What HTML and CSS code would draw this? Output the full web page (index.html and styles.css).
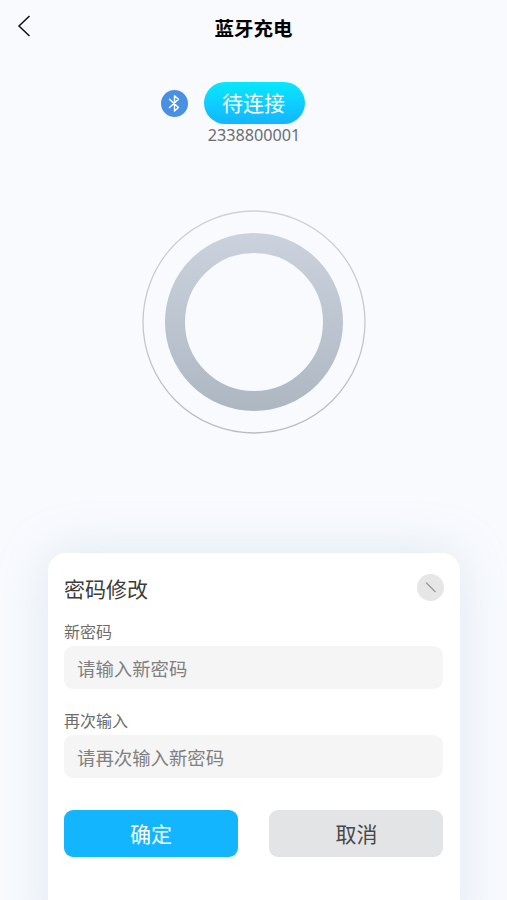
FILE: index.html
```html
<!DOCTYPE html>
<html lang="zh-CN">
<head>
<meta charset="utf-8">
<meta name="viewport" content="width=device-width, initial-scale=1">
<title>蓝牙充电</title>
<link rel="stylesheet" href="styles.css">
</head>
<body>
<div class="screen">
  <header class="navbar">
    <button class="back" aria-label="返回">
      <svg width="14" height="22" viewBox="0 0 14 22"><path d="M12.500 1 2 11l10.500 10" fill="none" stroke="#111" stroke-width="1.500"/></svg>
    </button>
    <h1 class="title">蓝牙充电</h1>
  </header>

  <section class="status">
    <span class="bluetooth">
      <svg width="27" height="27" viewBox="0 0 27 27"><path d="M8.500 9.200 17.500 17.500 13.500 21V5.800L17.500 9.300 8.500 17.500" fill="none" stroke="#fff" stroke-width="1.400" stroke-linejoin="round" stroke-linecap="round"/></svg>
    </span>
    <div class="device">
      <button class="connect">待连接</button>
      <span class="device-id">2338800001</span>
    </div>
  </section>

  <svg class="dial" width="224" height="224" viewBox="0 0 224 224">
    <defs>
      <linearGradient id="ring" x1="0" y1="23" x2="0" y2="201" gradientUnits="userSpaceOnUse">
        <stop offset="0" stop-color="#cbd2de"/><stop offset="1" stop-color="#adb7c2"/>
      </linearGradient>
      <linearGradient id="edge" x1="0" y1="0" x2="0" y2="224" gradientUnits="userSpaceOnUse">
        <stop offset="0" stop-color="#d0d2d6"/><stop offset="1" stop-color="#b9bcc1"/>
      </linearGradient>
    </defs>
    <circle cx="112" cy="112" r="111" fill="none" stroke="url(#edge)" stroke-width="1.300"/>
    <circle cx="112" cy="112" r="79" fill="none" stroke="url(#ring)" stroke-width="20"/>
  </svg>

  <main class="card">
    <div class="card-head">
      <h2 class="card-title">密码修改</h2>
      <button class="close" aria-label="关闭">
        <svg width="27" height="27" viewBox="0 0 27 27"><path d="M9 8.500 18.500 18" stroke="#999" stroke-width="1.300"/></svg>
      </button>
    </div>
    <label class="label" for="password">新密码</label>
    <input class="field" id="password" placeholder="请输入新密码">
    <label class="label label-again" for="again">再次输入</label>
    <input class="field" id="again" placeholder="请再次输入新密码">
    <div class="actions">
      <button class="btn btn-primary">确定</button>
      <button class="btn btn-plain">取消</button>
    </div>
  </main>
</div>
</body>
</html>
```
FILE: styles.css
```css
* { box-sizing: border-box; }

body, button, input {
  font-family: "Noto Sans", "Noto Sans CJK SC", sans-serif;
}

body { margin: 0; background: #f8fafe; }

button { border: 0; padding: 0; background: none; }

svg { display: block; }

.screen {
  height: 900px;
  overflow: hidden;
  display: flex;
  flex-direction: column;
}

.navbar {
  flex: none;
  height: 56px;
  display: grid;
  grid-template-columns: 60px 1fr 60px;
  align-items: center;
}

.back { padding: 0 0 4px 17px; }

.title {
  margin: 0;
  text-align: center;
  font-family: "Noto Sans CJK SC", sans-serif;
  font-size: 19.5px;
  line-height: 28px;
  font-weight: 700;
  color: #000;
}

.status {
  flex: none;
  display: flex;
  gap: 16px;
  margin: 26px 0 0 161px;
}

.bluetooth {
  width: 27px;
  height: 27px;
  margin-top: 8px;
  border-radius: 50%;
  background: #4a90e2;
}

.device {
  display: flex;
  flex-direction: column;
  align-items: center;
}

.connect {
  width: 101px;
  height: 42px;
  padding: 1px 2px 0 0;
  border-radius: 21px;
  background: linear-gradient(#08e8fd, #14b5ff);
  color: #fff;
  font-size: 21px;
  line-height: 41px;
}

.device-id {
  padding-right: 1px;
  font-size: 16.200px;
  line-height: 22px;
  color: #6b6d70;
}

.dial {
  flex: none;
  margin: 64px 0 0 142px;
}

.card {
  flex: none;
  width: 412px;
  height: 400px;
  margin: 119px 0 0 48px;
  padding: 21px 16px 0;
  border-radius: 18px;
  background: #fff;
  box-shadow: 0 0 50px rgba(160, 190, 205, 0.28);
}

.card-head {
  display: flex;
  align-items: flex-start;
  justify-content: space-between;
  height: 47px;
}

.card-title {
  margin: 0;
  font-size: 21px;
  line-height: 30px;
  font-weight: 400;
  color: #3c3c3c;
}

.close {
  width: 27px;
  height: 27px;
  border-radius: 50%;
  background: #e6e6e6;
}

.label {
  display: block;
  height: 25px;
  font-size: 16px;
  line-height: 22px;
  color: #6c6c6c;
}

.label-again { margin-top: 21px; }

.field {
  display: block;
  width: 379px;
  height: 43px;
  padding: 1px 13px 0;
  border: 0;
  border-radius: 9px;
  background: #f5f5f5;
  font-size: 18.400px;
}

.field::placeholder { color: #808080; opacity: 1; }

.actions {
  display: flex;
  gap: 31px;
  margin-top: 32px;
}

.btn {
  width: 174px;
  height: 47px;
  padding-top: 2px;
  border-radius: 9px;
  font-size: 21px;
  line-height: 45px;
}

.btn-primary { background: #14b5ff; color: #fff; }

.btn-plain { padding-left: 1px; background: #e3e4e6; color: #484848; }
```
